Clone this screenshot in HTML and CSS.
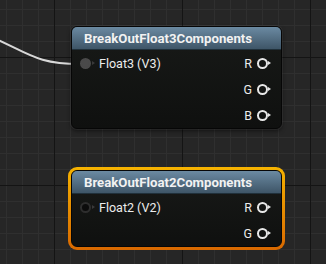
FILE: index.html
```html
<!DOCTYPE html>
<html lang="en">
<head>
    <meta charset="UTF-8">
    <title>Material graph</title>
    <link rel="stylesheet" href="styles.css">
</head>
<body>
    <div class="graph">
        <svg class="wire" width="326" height="264">
            <path d="M -30 28 C 28 50, 30 64, 80 64" fill="none" stroke="#d8d8d8" stroke-width="2"/>
        </svg>

        <div class="node node-a">
            <div class="title">BreakOutFloat3Components</div>
            <div class="rows">
                <div class="row">
                    <span class="pin-in linked"></span>
                    <span class="name">Float3 (V3)</span>
                    <span class="out">R <span class="pin-out"></span></span>
                </div>
                <div class="row">
                    <span class="out">G <span class="pin-out"></span></span>
                </div>
                <div class="row">
                    <span class="out">B <span class="pin-out"></span></span>
                </div>
            </div>
        </div>

        <div class="selected node-b">
            <div class="node">
                <div class="title">BreakOutFloat2Components</div>
                <div class="rows">
                    <div class="row">
                        <span class="pin-in"></span>
                        <span class="name">Float2 (V2)</span>
                        <span class="out">R <span class="pin-out"></span></span>
                    </div>
                    <div class="row">
                        <span class="out">G <span class="pin-out"></span></span>
                    </div>
                </div>
            </div>
        </div>
    </div>
</body>
</html>
```

FILE: styles.css
```css
* {
    margin: 0;
    padding: 0;
    box-sizing: border-box;
}
body {
    background: #262626;
    font-family: Roboto, "Liberation Sans", sans-serif;
    overflow: hidden;
}
.graph {
    position: relative;
    width: 326px;
    height: 264px;
    background-color: #262626;
    background-image:
        linear-gradient(to right, #141414 1px, transparent 1px),
        linear-gradient(to bottom, #141414 1px, transparent 1px),
        linear-gradient(to right, #2f2f2f 1px, transparent 1px),
        linear-gradient(to bottom, #2f2f2f 1px, transparent 1px);
    background-size: 128px 128px, 128px 128px, 16px 16px, 16px 16px;
    background-position: 54px 57px, 54px 57px, 6px 9px, 6px 9px;
}
.wire {
    position: absolute;
    left: 0;
    top: 0;
}
.node {
    width: 211px;
    border-radius: 6px;
    background: linear-gradient(#181a18, #0f100f);
    border: 1px solid #060606;
    box-shadow: 0 0 0 1px rgba(255, 255, 255, 0.06), 0 2px 4px rgba(0, 0, 0, 0.5);
    color: #ececec;
    overflow: hidden;
}
.node-a {
    position: absolute;
    left: 71px;
    top: 26px;
}
.node-b {
    position: absolute;
    left: 68px;
    top: 167px;
}
.selected {
    padding: 3px;
    border-radius: 9px;
    background: linear-gradient(#f6b300, #d86800);
}
.selected .node {
    box-shadow: none;
}
.title {
    height: 23px;
    padding-left: 12px;
    line-height: 23px;
    font-size: 13.2px;
    font-weight: bold;
    color: #f2f2f2;
    background: linear-gradient(#6b8aa2, #3e5567);
    border-bottom: 1px solid #20303a;
}
.rows {
    padding: 0;
}
.row {
    height: 26px;
    display: flex;
    align-items: center;
    font-size: 12.5px;
    position: relative;
}
.name {
    margin-left: 8px;
}
.out {
    margin-left: auto;
    margin-right: 9px;
    display: flex;
    align-items: center;
    gap: 5px;
}
.pin-in {
    width: 11px;
    height: 11px;
    margin-left: 8px;
    border-radius: 50%;
    border: 2px solid #2e2e2e;
    background: #0c0c0c;
    position: relative;
}
.pin-in.linked {
    border-color: #4a4a4a;
    background: #4a4a4a;
}
.pin-in::after {
    content: "";
    position: absolute;
    left: 10px;
    top: 1.5px;
    border-left: 3px solid #3a3a3a;
    border-top: 2.5px solid transparent;
    border-bottom: 2.5px solid transparent;
}
.pin-out {
    width: 11px;
    height: 11px;
    border-radius: 50%;
    border: 2px solid #e8e8e8;
    position: relative;
    margin-right: 4px;
}
.pin-out::after {
    content: "";
    position: absolute;
    left: 9px;
    top: 1.5px;
    border-left: 3px solid #e8e8e8;
    border-top: 2.5px solid transparent;
    border-bottom: 2.5px solid transparent;
}
```
